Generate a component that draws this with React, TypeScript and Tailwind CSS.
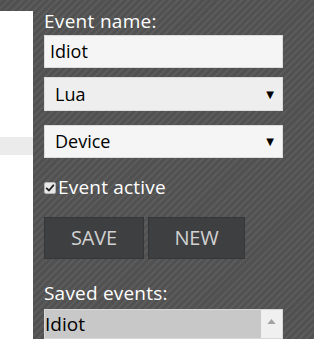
export default function App() {
  return (
    <div
      className="flex h-[339px] w-[314px] overflow-hidden bg-[repeating-linear-gradient(135deg,#5b5b5b_0px,#5b5b5b_2px,#515151_2px,#515151_5px)] text-[19px] text-white"
      style={{ fontFamily: '"Open Sans", "DejaVu Sans", sans-serif' }}
    >
      <div className="mt-[11px] flex h-[328px] w-[33px] flex-col bg-white">
        <div className="mt-[126px] h-[18px] bg-[#ebebeb]" />
      </div>

      <div className="ml-[11px] flex w-[239px] flex-col">
        <label className="mt-[8px] h-[28px] leading-[26px] tracking-[0.3px]">Event name:</label>
        <div className="flex h-[34px] items-center border border-[#dcdcdc] bg-[#f5f5f5] px-[5px] text-[18px] text-black">
          Idiot
        </div>

        <Select value="Lua" className="mt-[9px] bg-[#eeeeee]" />
        <Select value="Device" className="mt-[14px] bg-[#f5f5f5]" />

        <label className="mt-[19px] flex h-[22px] items-center">
          <span className="flex h-[12px] w-[12px] items-center justify-center rounded-[2px] border border-[#b5b5b5] bg-[#e8e8e8]">
            <svg viewBox="0 0 12 12" className="h-[10px] w-[10px]">
              <path d="M2 6.5 L4.8 9 L10 2.8" fill="none" stroke="#222" strokeWidth="2.2" strokeLinecap="round" strokeLinejoin="round" />
            </svg>
          </span>
          <span className="ml-[2px] tracking-[0.2px]">Event active</span>
        </label>

        <div className="mt-[18px] flex gap-[4px]">
          <button className="h-[42px] w-[100px] border border-[#353637] bg-[#3e3f41] text-[20px] text-[#d2d2d2] tracking-[-0.2px]">
            SAVE
          </button>
          <button className="h-[42px] w-[97px] border border-[#353637] bg-[#3e3f41] text-[20px] text-[#d2d2d2] tracking-[-0.2px]">
            NEW
          </button>
        </div>

        <label className="mt-[23px] h-[28px] leading-[22px] tracking-[0.2px]">Saved events:</label>
        <div className="flex h-[30px] border border-[#d8d8d8] bg-[#f0f0f0] text-black">
          <div className="flex h-[28px] flex-1 items-center bg-[#c8c8c8] text-[19px]">Idiot</div>
          <div className="flex w-[21px] justify-center pt-[9px]">
            <svg viewBox="0 0 10 6" className="h-[5px] w-[9px]">
              <path d="M0 6 L5 0 L10 6 Z" fill="#a3a3a3" />
            </svg>
          </div>
        </div>
      </div>
    </div>
  );
}

function Select({ value, className }: { value: string; className: string }) {
  return (
    <div className={`flex h-[34px] items-center justify-between border border-[#dcdcdc] pl-[10px] pr-[8px] text-[18px] text-black ${className}`}>
      <span>{value}</span>
      <span className="text-[10px]">▼</span>
    </div>
  );
}
